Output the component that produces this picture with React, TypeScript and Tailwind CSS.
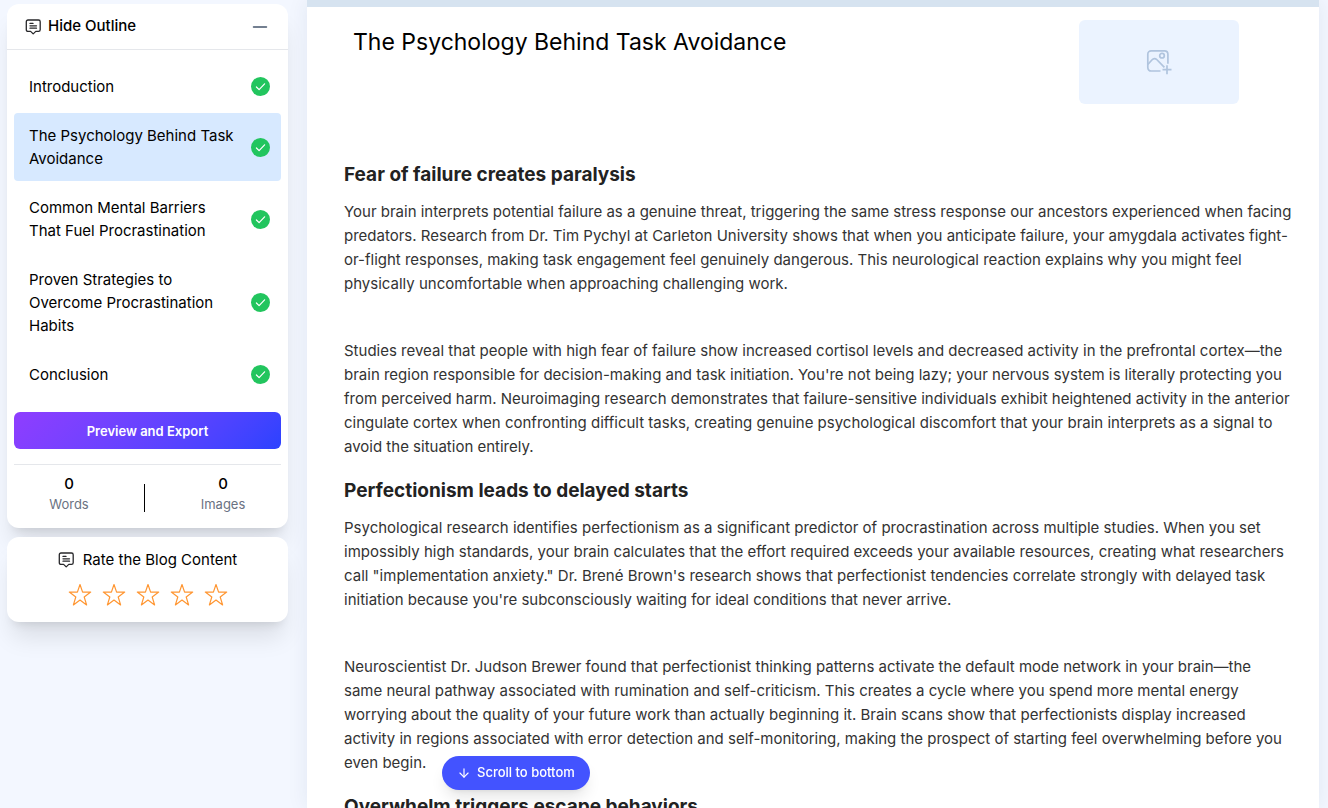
import React, { useState } from 'react';
import { ArrowDown, Minus } from 'lucide-react';

interface OutlineItem {
    title: string;
    done: boolean;
}

interface Section {
    heading: string;
    paragraphs: string[];
}

const outline: OutlineItem[] = [
    { title: 'Introduction', done: true },
    { title: 'The Psychology Behind Task Avoidance', done: true },
    { title: 'Common Mental Barriers That Fuel Procrastination', done: true },
    { title: 'Proven Strategies to Overcome Procrastination Habits', done: true },
    { title: 'Conclusion', done: true },
];

const sections: Section[] = [
    {
        heading: 'Fear of failure creates paralysis',
        paragraphs: [
            'Your brain interprets potential failure as a genuine threat, triggering the same stress response our ancestors experienced when facing predators. Research from Dr. Tim Pychyl at Carleton University shows that when you anticipate failure, your amygdala activates fight-or-flight responses, making task engagement feel genuinely dangerous. This neurological reaction explains why you might feel physically uncomfortable when approaching challenging work.',
            "Studies reveal that people with high fear of failure show increased cortisol levels and decreased activity in the prefrontal cortex—the brain region responsible for decision-making and task initiation. You're not being lazy; your nervous system is literally protecting you from perceived harm. Neuroimaging research demonstrates that failure-sensitive individuals exhibit heightened activity in the anterior cingulate cortex when confronting difficult tasks, creating genuine psychological discomfort that your brain interprets as a signal to avoid the situation entirely.",
        ],
    },
    {
        heading: 'Perfectionism leads to delayed starts',
        paragraphs: [
            'Psychological research identifies perfectionism as a significant predictor of procrastination across multiple studies. When you set impossibly high standards, your brain calculates that the effort required exceeds your available resources, creating what researchers call "implementation anxiety." Dr. Brené Brown\'s research shows that perfectionist tendencies correlate strongly with delayed task initiation because you\'re subconsciously waiting for ideal conditions that never arrive.',
            'Neuroscientist Dr. Judson Brewer found that perfectionist thinking patterns activate the default mode network in your brain—the same neural pathway associated with rumination and self-criticism. This creates a cycle where you spend more mental energy worrying about the quality of your future work than actually beginning it. Brain scans show that perfectionists display increased activity in regions associated with error detection and self-monitoring, making the prospect of starting feel overwhelming before you even begin.',
        ],
    },
    {
        heading: 'Overwhelm triggers escape behaviors',
        paragraphs: [],
    },
];

function NoteIcon() {
    return (
        <svg className="w-4 h-4 shrink-0" viewBox="0 0 16 16" fill="none" stroke="#27272a" strokeWidth="1.3" strokeLinecap="round" strokeLinejoin="round">
            <path d="M3 1h10.500c1 0 1.700.7 1.700 1.700v8c0 1-.7 1.700-1.700 1.700h-2.700l-2.600 2.500-2.600-2.500H3c-1 0-1.700-.7-1.700-1.700v-8C1.300 1.700 2 1 3 1z" />
            <path d="M5 4.400h3M5 6.800h6.500M5 9.200h6.500" />
        </svg>
    );
}

function AddImageIcon() {
    return (
        <svg className="w-6 h-6 overflow-visible" viewBox="0 0 24 24" fill="none" stroke="#b0c4de" strokeWidth="1.700">
            <path d="M13.500 21H4.200C2.200 21 .8 19.600.8 17.600V4.200C.8 2.200 2.200.8 4.200.8h13.300c2 0 3.400 1.400 3.400 3.400v9.600" />
            <circle cx="15" cy="5.700" r="2.300" />
            <path d="M.8 14.500l4.300-4.800c1.300-1.500 3.300-1.500 4.600-.2l7.700 7.800M20 15.200v9M15.500 19.700h9" />
        </svg>
    );
}

function DoneBadge() {
    return (
        <svg className="w-[19px] h-[19px] shrink-0" viewBox="0 0 19 19" fill="none">
            <circle cx="9.500" cy="9.500" r="9.500" fill="#22c55e" />
            <path d="M5.400 10l2.700 2.700 5.500-5.900" stroke="#ffffff" strokeWidth="1.200" strokeLinecap="round" strokeLinejoin="round" />
        </svg>
    );
}

function Star() {
    return (
        <svg className="w-6 h-6" viewBox="0 0 24 24" fill="none" stroke="#ff9632" strokeWidth="1.200" strokeLinejoin="round">
            <path d="M12 1.500l2.600 7.600h8.100l-6.500 4.900 2.400 7.900-6.600-4.800-6.600 4.800 2.400-7.900-6.500-4.900h8.100z" />
        </svg>
    );
}

export default function App() {
    const [active, setActive] = useState(1);

    return (
        <div className="flex h-screen overflow-hidden bg-[#f3f7ff] font-['Inter',sans-serif] text-black">
            <aside className="w-[295px] shrink-0 px-[7px] pt-1">
                <div className="rounded-xl bg-white shadow-xl">
                    <button className="flex w-full h-[46px] items-center justify-between border-b border-gray-200 pl-[18px] pr-[17px]">
                        <span className="flex items-center gap-[7px] text-[15px] font-medium">
                            <NoteIcon />
                            Hide Outline
                        </span>
                        <Minus className="w-[22px] h-[22px] text-slate-600" strokeWidth={1.8} />
                    </button>

                    <div className="px-[7px] py-[14px]">
                        <nav className="flex flex-col gap-1">
                            {outline.map((item, i) => (
                                <button
                                    key={item.title}
                                    onClick={() => setActive(i)}
                                    className={`flex items-center justify-between gap-3 rounded py-[11px] pl-[15px] pr-[11px] text-left text-[15px] leading-[23px] ${i === active ? 'bg-[#d7e9ff]' : ''}`}
                                >
                                    <span>{item.title}</span>
                                    {item.done && <DoneBadge />}
                                </button>
                            ))}
                        </nav>

                        <button className="mt-[15px] h-[37px] w-full rounded-md bg-linear-135 from-[#8f3dff] to-[#2b42ff] pt-[3px] text-[13px] font-semibold text-white">
                            Preview and Export
                        </button>

                        <div className="mt-[15px] flex items-center justify-between border-t border-gray-200 pt-[9px]">
                            <div className="w-[110px] text-center leading-5">
                                <p className="text-[15px] font-medium">0</p>
                                <p className="text-[13px] text-gray-500">Words</p>
                            </div>
                            <div className="mt-2 h-7 w-px bg-black" />
                            <div className="w-[116px] text-center leading-5">
                                <p className="text-[15px] font-medium">0</p>
                                <p className="text-[13px] text-gray-500">Images</p>
                            </div>
                        </div>
                    </div>
                </div>

                <div className="mt-[9px] rounded-xl bg-white pt-3 pb-[15px] shadow-xl">
                    <div className="flex items-center justify-center gap-[9px] text-[15px] leading-[22px]">
                        <NoteIcon />
                        Rate the Blog Content
                    </div>
                    <div className="mt-3 flex justify-center gap-[10px]">
                        {[1, 2, 3, 4, 5].map((n) => (
                            <button key={n} aria-label={`Rate ${n}`}>
                                <Star />
                            </button>
                        ))}
                    </div>
                </div>
            </aside>

            <main className="ml-3 mr-[9px] min-w-0 flex-1 overflow-hidden border-t-[7px] border-[#d6e3f0] bg-white shadow-[0_0_20px_rgba(30,50,90,0.08)]">
                <header className="flex items-start justify-between pt-[13px] pl-[46px] pr-20">
                    <h1 className="mt-1 text-[23px] leading-9">The Psychology Behind Task Avoidance</h1>
                    <button aria-label="Add image" className="flex h-[84px] w-40 items-center justify-center rounded-md bg-[#ebf3ff]">
                        <AddImageIcon />
                    </button>
                </header>

                <article className="mt-[55px] pl-[37px] pr-[27px] text-[15px] leading-6 text-[#333333]">
                    {sections.map((section) => (
                        <section key={section.heading} className="mb-4">
                            <h2 className="mb-[9px] text-[19px] leading-8 font-bold text-[#222222]">{section.heading}</h2>
                            <div className="flex flex-col gap-[43px]">
                                {section.paragraphs.map((text) => (
                                    <p key={text}>{text}</p>
                                ))}
                            </div>
                        </section>
                    ))}
                </article>
            </main>

            <button className="fixed bottom-[18px] left-[442px] flex h-[34px] items-center gap-[6px] rounded-full bg-[#4353ff] px-[15px] text-[13px] font-medium text-white shadow-lg">
                <ArrowDown className="w-[14px] h-[14px]" />
                Scroll to bottom
            </button>
        </div>
    );
}
